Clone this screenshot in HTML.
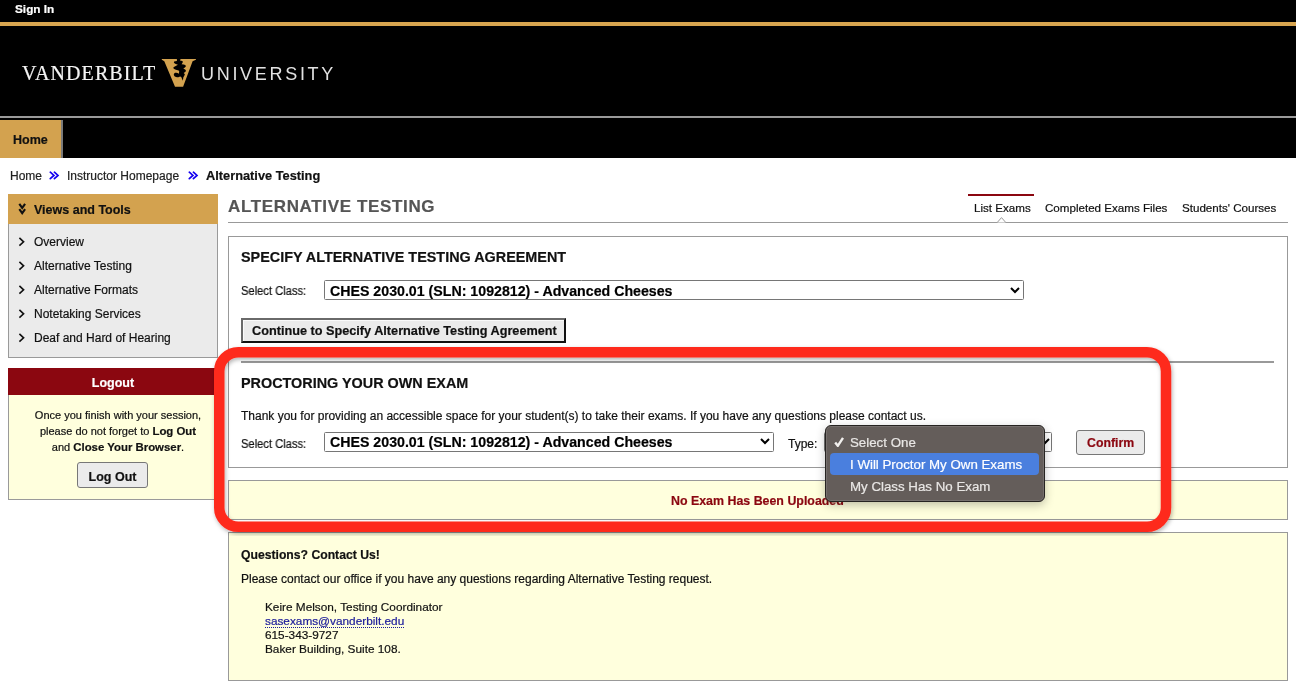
<!DOCTYPE html>
<html><head><meta charset="utf-8"><title>Alternative Testing</title>
<style>
html,body{margin:0;padding:0;width:1296px;height:691px;overflow:hidden;background:#fff;font-family:"Liberation Sans",sans-serif}
b{font-weight:bold}
body>div,body>svg{will-change:transform}
body>div{-webkit-text-stroke:0.2px currentColor}
</style></head><body>
<div style="position:absolute;left:0px;top:0px;width:1296px;height:22px;background:#000"></div>
<div style="position:absolute;left:15px;top:4px;font-size:11.8px;line-height:11.8px;font-family:'Liberation Sans',sans-serif;font-weight:bold;color:#fff;white-space:nowrap;">Sign In</div>
<div style="position:absolute;left:0px;top:22px;width:1296px;height:4px;background:#d8a54f"></div>
<div style="position:absolute;left:0px;top:26px;width:1296px;height:90px;background:#000"></div>
<div style="position:absolute;left:21.5px;top:63px;font-size:20px;line-height:20px;font-family:'Liberation Serif',serif;font-weight:normal;color:#f4f4f4;white-space:nowrap;letter-spacing:1.1px">VANDERBILT</div>
<div style="position:absolute;left:201px;top:65px;font-size:18px;line-height:18px;font-family:'Liberation Sans',sans-serif;font-weight:normal;color:#e2e2e2;white-space:nowrap;letter-spacing:2.7px;-webkit-text-stroke:0">UNIVERSITY</div>
<svg style="position:absolute;left:160px;top:57px" width="38" height="32" viewBox="0 0 38 32">
<path fill="#d3a24f" d="M1.8 2 L35.9 2 L35.9 2.8 L32.6 4.2 L23.1 29.7 L15 29.7 L4.3 4.2 L1.8 2.8 Z"/>
<path fill="#000" d="M16.9 1.5 L20.4 1.5 L20.4 3.9 Q23.6 3.5 22.7 5.5 L21.6 7.3 Q26.6 7.4 25.7 9.7 L23.3 11.8 Q26.9 12.8 25.5 14.7 L23.7 15.9 Q25.7 17 24.4 18.5 L23.3 20.5 L22.9 23.7 L21.2 20.1 Q20.4 19.1 19.5 19.7 Q17 21.1 14.5 19.3 Q12.9 17.1 15 15.8 Q17.1 15.2 18.9 16.7 L19.2 14.3 L18.6 13.4 Q12.4 12.3 13.5 10.2 L17.9 7.7 Q12.9 6.3 14.1 4.4 L16.9 3.9 Z"/>
</svg>
<div style="position:absolute;left:0px;top:116px;width:1296px;height:2px;background:#9a9a9a"></div>
<div style="position:absolute;left:0px;top:118px;width:1296px;height:40px;background:#000"></div>
<div style="position:absolute;left:0px;top:120px;width:61px;height:38px;background:#d3a24f"></div>
<div style="position:absolute;left:61px;top:120px;width:2px;height:38px;background:#7a7a7a"></div>
<div style="position:absolute;left:12.5px;top:134px;font-size:12.5px;line-height:12.5px;font-family:'Liberation Sans',sans-serif;font-weight:bold;color:#111;white-space:nowrap;">Home</div>
<div style="position:absolute;left:9.5px;top:170px;font-size:12px;line-height:12px;font-family:'Liberation Sans',sans-serif;font-weight:normal;color:#222;white-space:nowrap;">Home</div>
<svg style="position:absolute;left:49px;top:171px" width="11" height="9" viewBox="0 0 11 9"><path d="M1.3 1.2 L4.9 4.4 L1.3 7.6 M5.4 1.2 L9 4.4 L5.4 7.6" stroke="#1400f0" stroke-width="1.7" fill="none" stroke-linecap="round"/></svg>
<div style="position:absolute;left:67px;top:170px;font-size:12px;line-height:12px;font-family:'Liberation Sans',sans-serif;font-weight:normal;color:#222;white-space:nowrap;">Instructor Homepage</div>
<svg style="position:absolute;left:188px;top:171px" width="11" height="9" viewBox="0 0 11 9"><path d="M1.3 1.2 L4.9 4.4 L1.3 7.6 M5.4 1.2 L9 4.4 L5.4 7.6" stroke="#1400f0" stroke-width="1.7" fill="none" stroke-linecap="round"/></svg>
<div style="position:absolute;left:205.5px;top:170px;font-size:12.8px;line-height:12.8px;font-family:'Liberation Sans',sans-serif;font-weight:bold;color:#111;white-space:nowrap;">Alternative Testing</div>
<div style="position:absolute;left:8px;top:194px;width:210px;height:164px;background:#ebebeb;border:1px solid #9a9a9a;box-sizing:border-box"></div>
<div style="position:absolute;left:8px;top:194px;width:210px;height:30px;background:#d3a24f"></div>
<svg style="position:absolute;left:18px;top:203px" width="9" height="13" viewBox="0 0 9 13"><path d="M1.3 0.9 L4.2 4.9 L7.1 0.9 M1.3 6.1 L4.2 10.1 L7.1 6.1" stroke="#111" stroke-width="2.1" fill="none"/></svg>
<div style="position:absolute;left:33.5px;top:204px;font-size:12.5px;line-height:12.5px;font-family:'Liberation Sans',sans-serif;font-weight:bold;color:#111;white-space:nowrap;">Views and Tools</div>
<svg style="position:absolute;left:18px;top:237px" width="8" height="10" viewBox="0 0 8 10"><path d="M1.4 0.9 L5.6 4.8 L1.4 8.7" stroke="#111" stroke-width="1.6" fill="none"/></svg>
<div style="position:absolute;left:33.5px;top:236px;font-size:12px;line-height:12px;font-family:'Liberation Sans',sans-serif;font-weight:normal;color:#111;white-space:nowrap;">Overview</div>
<svg style="position:absolute;left:18px;top:261px" width="8" height="10" viewBox="0 0 8 10"><path d="M1.4 0.9 L5.6 4.8 L1.4 8.7" stroke="#111" stroke-width="1.6" fill="none"/></svg>
<div style="position:absolute;left:33.5px;top:260px;font-size:12px;line-height:12px;font-family:'Liberation Sans',sans-serif;font-weight:normal;color:#111;white-space:nowrap;">Alternative Testing</div>
<svg style="position:absolute;left:18px;top:285px" width="8" height="10" viewBox="0 0 8 10"><path d="M1.4 0.9 L5.6 4.8 L1.4 8.7" stroke="#111" stroke-width="1.6" fill="none"/></svg>
<div style="position:absolute;left:33.5px;top:284px;font-size:12px;line-height:12px;font-family:'Liberation Sans',sans-serif;font-weight:normal;color:#111;white-space:nowrap;">Alternative Formats</div>
<svg style="position:absolute;left:18px;top:309px" width="8" height="10" viewBox="0 0 8 10"><path d="M1.4 0.9 L5.6 4.8 L1.4 8.7" stroke="#111" stroke-width="1.6" fill="none"/></svg>
<div style="position:absolute;left:33.5px;top:308px;font-size:12px;line-height:12px;font-family:'Liberation Sans',sans-serif;font-weight:normal;color:#111;white-space:nowrap;">Notetaking Services</div>
<svg style="position:absolute;left:18px;top:333px" width="8" height="10" viewBox="0 0 8 10"><path d="M1.4 0.9 L5.6 4.8 L1.4 8.7" stroke="#111" stroke-width="1.6" fill="none"/></svg>
<div style="position:absolute;left:33.5px;top:332px;font-size:12px;line-height:12px;font-family:'Liberation Sans',sans-serif;font-weight:normal;color:#111;white-space:nowrap;">Deaf and Hard of Hearing</div>
<div style="position:absolute;left:8px;top:368px;width:210px;height:132px;background:#ffffdd;border:1px solid #9a9a9a;box-sizing:border-box"></div>
<div style="position:absolute;left:8px;top:368px;width:210px;height:27px;background:#8b0710"></div>
<div style="position:absolute;left:8px;width:210px;text-align:center;top:377px;font-size:12.5px;line-height:12.5px;font-family:'Liberation Sans',sans-serif;font-weight:bold;color:#fff;white-space:nowrap;">Logout</div>
<div style="position:absolute;left:13px;width:210px;text-align:center;top:410px;font-size:11px;line-height:11px;font-family:'Liberation Sans',sans-serif;font-weight:normal;color:#111;white-space:nowrap;">Once you finish with your session,</div>
<div style="position:absolute;left:13px;width:210px;text-align:center;top:426px;font-size:11px;line-height:11px;font-family:'Liberation Sans',sans-serif;font-weight:normal;color:#111;white-space:nowrap;">please do not forget to <b style='font-size:11.4px'>Log Out</b></div>
<div style="position:absolute;left:13px;width:210px;text-align:center;top:442px;font-size:11px;line-height:11px;font-family:'Liberation Sans',sans-serif;font-weight:normal;color:#111;white-space:nowrap;">and <b style='font-size:11.4px'>Close Your Browser</b>.</div>
<div style="position:absolute;left:77px;top:462px;width:71px;height:26px;background:#ebebeb;border:1px solid #777;border-radius:3px;box-sizing:border-box"></div>
<div style="position:absolute;left:77px;width:71px;text-align:center;top:471px;font-size:12.5px;line-height:12.5px;font-family:'Liberation Sans',sans-serif;font-weight:bold;color:#111;white-space:nowrap;">Log Out</div>
<div style="position:absolute;left:228px;top:198px;font-size:17px;line-height:17px;font-family:'Liberation Sans',sans-serif;font-weight:bold;color:#555;white-space:nowrap;letter-spacing:0.65px">ALTERNATIVE TESTING</div>
<div style="position:absolute;left:973.5px;top:202px;font-size:11.6px;line-height:11.6px;font-family:'Liberation Sans',sans-serif;font-weight:normal;color:#111;white-space:nowrap;">List Exams</div>
<div style="position:absolute;left:1045px;top:202px;font-size:11.6px;line-height:11.6px;font-family:'Liberation Sans',sans-serif;font-weight:normal;color:#111;white-space:nowrap;">Completed Exams Files</div>
<div style="position:absolute;left:1182.3px;top:202px;font-size:11.6px;line-height:11.6px;font-family:'Liberation Sans',sans-serif;font-weight:normal;color:#111;white-space:nowrap;">Students' Courses</div>
<div style="position:absolute;left:968px;top:194px;width:66px;height:2px;background:#8b0710"></div>
<div style="position:absolute;left:228px;top:222px;width:1060px;height:1px;background:#999"></div>
<svg style="position:absolute;left:997px;top:217px" width="9" height="6" viewBox="0 0 9 6"><path d="M0.2 5.5 L4.5 0.6 L8.8 5.5" stroke="#999" stroke-width="1" fill="#fff"/></svg>
<div style="position:absolute;left:228px;top:236px;width:1060px;height:232px;border:1px solid #999;box-sizing:border-box;background:#fff"></div>
<div style="position:absolute;left:241px;top:250px;font-size:14.4px;line-height:14.4px;font-family:'Liberation Sans',sans-serif;font-weight:bold;color:#111;white-space:nowrap;">SPECIFY ALTERNATIVE TESTING AGREEMENT</div>
<div style="position:absolute;left:241px;top:285px;font-size:12px;line-height:12px;font-family:'Liberation Sans',sans-serif;font-weight:normal;color:#111;white-space:nowrap;transform:scaleX(0.93);transform-origin:left">Select Class:</div>
<div style="position:absolute;left:324px;top:280px;width:700px;height:20px;border:1px solid #767676;border-radius:1.5px;box-sizing:border-box;background:#fff"></div>
<div style="position:absolute;left:330px;top:284px;font-size:14.2px;line-height:14.2px;font-family:'Liberation Sans',sans-serif;font-weight:bold;color:#000;white-space:nowrap;">CHES 2030.01 (SLN: 1092812) - Advanced Cheeses</div>
<svg style="position:absolute;left:1010px;top:287px" width="10" height="7" viewBox="0 0 10 7"><path d="M1 1 L5 5 L9 1" stroke="#000" stroke-width="2" fill="none"/></svg>
<div style="position:absolute;left:241px;top:318px;width:325px;height:25px;border:2px solid;border-color:#6a6a6a #111 #111 #6a6a6a;background:#ebebeb;box-sizing:border-box;box-shadow:inset 1px 1px 0 #fafafa"></div>
<div style="position:absolute;left:251.5px;top:325px;font-size:12.7px;line-height:12.7px;font-family:'Liberation Sans',sans-serif;font-weight:bold;color:#111;white-space:nowrap;">Continue to Specify Alternative Testing Agreement</div>
<div style="position:absolute;left:241px;top:361px;width:1033px;height:2px;background:#999"></div>
<div style="position:absolute;left:241px;top:376px;font-size:14.4px;line-height:14.4px;font-family:'Liberation Sans',sans-serif;font-weight:bold;color:#111;white-space:nowrap;">PROCTORING YOUR OWN EXAM</div>
<div style="position:absolute;left:241px;top:410px;font-size:12px;line-height:12px;font-family:'Liberation Sans',sans-serif;font-weight:normal;color:#111;white-space:nowrap;">Thank you for providing an accessible space for your student(s) to take their exams. If you have any questions please contact us.</div>
<div style="position:absolute;left:241px;top:438px;font-size:12px;line-height:12px;font-family:'Liberation Sans',sans-serif;font-weight:normal;color:#111;white-space:nowrap;transform:scaleX(0.93);transform-origin:left">Select Class:</div>
<div style="position:absolute;left:324px;top:432px;width:450px;height:20px;border:1px solid #767676;border-radius:1.5px;box-sizing:border-box;background:#fff"></div>
<div style="position:absolute;left:330px;top:435px;font-size:14.2px;line-height:14.2px;font-family:'Liberation Sans',sans-serif;font-weight:bold;color:#000;white-space:nowrap;">CHES 2030.01 (SLN: 1092812) - Advanced Cheeses</div>
<svg style="position:absolute;left:760px;top:438px" width="10" height="7" viewBox="0 0 10 7"><path d="M1 1 L5 5 L9 1" stroke="#000" stroke-width="2" fill="none"/></svg>
<div style="position:absolute;left:787.7px;top:438px;font-size:12px;line-height:12px;font-family:'Liberation Sans',sans-serif;font-weight:normal;color:#111;white-space:nowrap;">Type:</div>
<div style="position:absolute;left:824px;top:432px;width:228px;height:20px;border:1px solid #767676;border-radius:1.5px;box-sizing:border-box;background:#fff"></div>
<svg style="position:absolute;left:1040px;top:438px" width="10" height="7" viewBox="0 0 10 7"><path d="M1 1 L5 5 L9 1" stroke="#000" stroke-width="2" fill="none"/></svg>
<div style="position:absolute;left:1076px;top:430px;width:69px;height:25px;border:1px solid #777;border-radius:3px;background:#ebebeb;box-sizing:border-box"></div>
<div style="position:absolute;left:1086.7px;top:437px;font-size:12.3px;line-height:12.3px;font-family:'Liberation Sans',sans-serif;font-weight:bold;color:#8b0710;white-space:nowrap;">Confirm</div>
<div style="position:absolute;left:228px;top:480px;width:1060px;height:40px;border:1px solid #999;box-sizing:border-box;background:#ffffdd"></div>
<div style="position:absolute;left:671.2px;top:495px;font-size:12.4px;line-height:12.4px;font-family:'Liberation Sans',sans-serif;font-weight:bold;color:#8b0710;white-space:nowrap;">No Exam Has Been Uploaded</div>
<div style="position:absolute;left:228px;top:532px;width:1060px;height:149px;border:1px solid #999;box-sizing:border-box;background:#ffffdd"></div>
<div style="position:absolute;left:241px;top:549px;font-size:12.2px;line-height:12.2px;font-family:'Liberation Sans',sans-serif;font-weight:bold;color:#111;white-space:nowrap;">Questions? Contact Us!</div>
<div style="position:absolute;left:241px;top:573px;font-size:12px;line-height:12px;font-family:'Liberation Sans',sans-serif;font-weight:normal;color:#111;white-space:nowrap;">Please contact our office if you have any questions regarding Alternative Testing request.</div>
<div style="position:absolute;left:264.8px;top:602px;font-size:11.8px;line-height:11.8px;font-family:'Liberation Sans',sans-serif;font-weight:normal;color:#111;white-space:nowrap;">Keire Melson, Testing Coordinator</div>
<div style="position:absolute;left:264.8px;top:616px;font-size:11.8px;line-height:11.8px;font-family:'Liberation Sans',sans-serif;font-weight:normal;color:#1a1a9a;white-space:nowrap;text-decoration:underline dotted #1a1a9a;text-underline-offset:2px">sasexams@vanderbilt.edu</div>
<div style="position:absolute;left:264.8px;top:630px;font-size:11.8px;line-height:11.8px;font-family:'Liberation Sans',sans-serif;font-weight:normal;color:#111;white-space:nowrap;">615-343-9727</div>
<div style="position:absolute;left:264.8px;top:644px;font-size:11.8px;line-height:11.8px;font-family:'Liberation Sans',sans-serif;font-weight:normal;color:#111;white-space:nowrap;">Baker Building, Suite 108.</div>
<div style="position:absolute;left:824.5px;top:425.4px;width:220.2px;height:77.3px;background:#645d5a;border:1px solid #262321;border-radius:6px;box-sizing:border-box;box-shadow:inset 0 0 0 1px rgba(255,255,255,0.12),0 3px 10px rgba(0,0,0,0.25)"></div>
<div style="position:absolute;left:830px;top:453px;width:209px;height:22px;background:#4a7fde;border-radius:4px"></div>
<svg style="position:absolute;left:834px;top:437px" width="10" height="10" viewBox="0 0 10 10"><path d="M1.2 5.6 L3.8 8.8 L9 0.8" stroke="#f2f0ee" stroke-width="2.4" fill="none"/></svg>
<div style="position:absolute;left:850.2px;top:436px;font-size:13.3px;line-height:13.3px;font-family:'Liberation Sans',sans-serif;font-weight:normal;color:#e9e7e5;white-space:nowrap;">Select One</div>
<div style="position:absolute;left:850.2px;top:458px;font-size:13.3px;line-height:13.3px;font-family:'Liberation Sans',sans-serif;font-weight:normal;color:#fff;white-space:nowrap;">I Will Proctor My Own Exams</div>
<div style="position:absolute;left:850.2px;top:480px;font-size:13.3px;line-height:13.3px;font-family:'Liberation Sans',sans-serif;font-weight:normal;color:#e9e7e5;white-space:nowrap;">My Class Has No Exam</div>
<svg style="position:absolute;left:0;top:0" width="1296" height="691"><defs><filter id="sh" x="-5%" y="-5%" width="110%" height="110%"><feDropShadow dx="1" dy="2" stdDeviation="2" flood-color="#000" flood-opacity="0.3"/></filter></defs><rect x="219.25" y="352.25" width="946.75" height="174.5" rx="19" ry="19" fill="none" stroke="#fe2a1c" stroke-width="10.5" filter="url(#sh)"/></svg>
</body></html>
